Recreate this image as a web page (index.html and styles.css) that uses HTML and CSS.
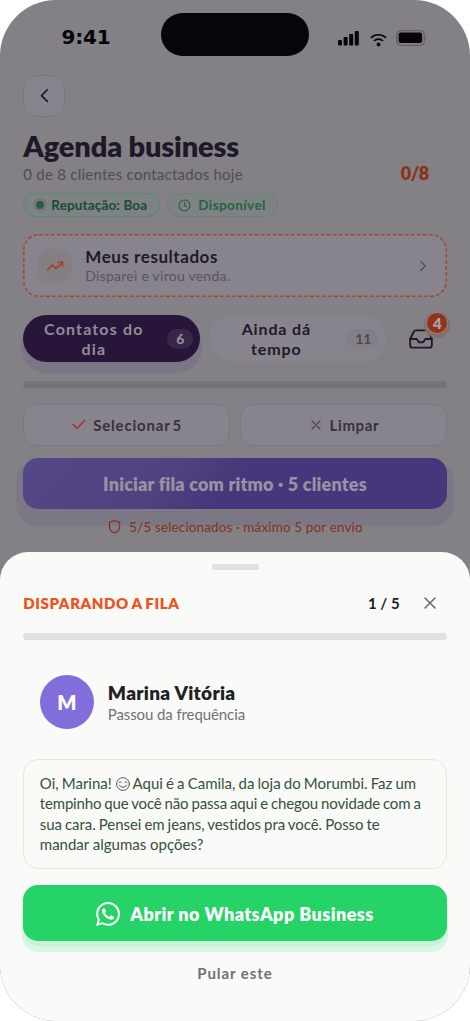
FILE: index.html
```html
<!DOCTYPE html>
<html lang="pt-BR">
<head>
<meta charset="utf-8">
<title>Agenda business</title>
<link rel="stylesheet" href="styles.css">
</head>
<body>
<div class="phone">
  <header class="status">
    <span class="clock">9:41</span>
    <span class="island"></span>
    <span class="signals">
      <svg width="21" height="15" viewBox="0 0 21 15" fill="#08040c"><rect x="0" y="9" width="4" height="5.5" rx="1"/><rect x="5.6" y="6" width="4" height="8.500" rx="1"/><rect x="11.200" y="3" width="4" height="11.500" rx="1"/><rect x="16.800" y="0" width="4" height="14.500" rx="1"/></svg>
      <svg class="wifi" width="17" height="14" viewBox="0 0 17 14" fill="none" stroke="#08040c" stroke-width="1.700"><path d="M1 4.800a10.800 10.800 0 0 1 15 0M4 8a6.500 6.500 0 0 1 9 0"/><circle cx="8.500" cy="11.500" r="1.900" fill="#08040c" stroke="none"/></svg>
      <svg class="battery" width="32" height="16" viewBox="0 0 32 16"><rect x=".7" y=".7" width="27.600" height="14.600" rx="4.300" fill="none" stroke="#655c6a" stroke-width="1.300"/><rect x="2.600" y="2.500" width="23.500" height="10.500" rx="2" fill="#08040c"/><path d="M29.600 5.700q1.800 2 0 4z" fill="#655c6a"/></svg>
    </span>
  </header>
  <main class="agenda">
    <button class="back"><svg width="20" height="20" viewBox="0 0 24 24" fill="none" stroke="#1f1828" stroke-width="2" stroke-linecap="round" stroke-linejoin="round"><path d="m16 18.500-7-7 7-7"/></svg></button>
    <div class="heading">
      <div><h1>Agenda business</h1><p>0 de 8 clientes contactados hoje</p></div>
      <strong class="score">0/8</strong>
    </div>
    <div class="chips">
      <span class="chip good"><i class="dot"></i><b>Reputação: Boa</b></span>
      <span class="chip"><svg width="13" height="13" viewBox="0 0 24 24" fill="none" stroke="#256345" stroke-width="2.200" stroke-linecap="round"><circle cx="12" cy="12" r="10"/><path d="M12 6v6l4 2"/></svg><b>Disponível</b></span>
    </div>
    <section class="results">
      <svg class="outline" width="424" height="63"><rect x=".8" y=".8" width="422.400" height="61.400" rx="15" fill="none" stroke="#9b4a33" stroke-width="1.500" stroke-dasharray="4 2"/></svg>
      <span class="trend"><svg width="18" height="18" viewBox="0 0 24 24" fill="none" stroke="#a54226" stroke-width="2" stroke-linecap="round" stroke-linejoin="round"><path d="m2 17 6.500-6.500 5 5L22 7"/><path d="M16 7h6v6"/></svg></span>
      <div class="results-text"><h2>Meus resultados</h2><p>Disparei e virou venda.</p></div>
      <svg width="18" height="18" viewBox="0 0 24 24" fill="none" stroke="#554f5a" stroke-width="1.800" stroke-linecap="round" stroke-linejoin="round"><path d="m9 18 6-6-6-6"/></svg>
    </section>
    <nav class="tabs">
      <button class="tab active"><span>Contatos do<br>dia</span><em>6</em></button>
      <button class="tab"><span>Ainda dá<br>tempo</span><em>11</em></button>
      <button class="inbox"><svg width="26" height="26" viewBox="0 0 24 24" fill="none" stroke="#1f1828" stroke-width="1.700" stroke-linecap="round" stroke-linejoin="round"><path d="M22 12h-6l-2 3h-4l-2-3H2"/><path d="M5.450 5.110 2 12v6a2 2 0 0 0 2 2h16a2 2 0 0 0 2-2v-6l-3.450-6.890A2 2 0 0 0 16.760 4H7.240a2 2 0 0 0-1.790 1.110z"/></svg><em>4</em></button>
    </nav>
    <div class="progress dim"></div>
    <div class="actions">
      <button><svg width="16" height="16" viewBox="0 0 24 24" fill="none" stroke="#a0361a" stroke-width="2.200" stroke-linecap="round" stroke-linejoin="round"><path d="M21 5 9 17l-6-6"/></svg><span class="select-label">Selecionar 5</span></button>
      <button class="clear"><svg width="16" height="16" viewBox="0 0 24 24" fill="none" stroke="#4b4552" stroke-width="1.800" stroke-linecap="round"><path d="M18 6 6 18M6 6l12 12"/></svg><span>Limpar</span></button>
    </div>
    <button class="start"><span>Iniciar fila com ritmo · 5 clientes</span></button>
    <p class="limit"><svg width="15" height="15" viewBox="0 0 24 24" fill="none" stroke="#852f1c" stroke-width="2" stroke-linejoin="round"><path d="M20 13c0 5-3.500 7.500-8 9-4.500-1.500-8-4-8-9V5c3 0 6-1.500 8-3 2 1.500 5 3 8 3z"/></svg><span>5/5 selecionados · máximo 5 por envio</span></p>
  </main>
  <section class="sheet">
    <i class="handle"></i>
    <div class="sheet-head"><h3>DISPARANDO A FILA</h3><strong>1 / 5</strong><svg width="20" height="20" viewBox="0 0 24 24" fill="none" stroke="#6a6370" stroke-width="1.800" stroke-linecap="round"><path d="M18 6 6 18M6 6l12 12"/></svg></div>
    <div class="progress"></div>
    <div class="person"><span class="avatar">M</span><div><h2>Marina Vitória</h2><p>Passou da frequência</p></div></div>
    <div class="message">
      <p class="m1">Oi, Marina! <svg class="smile" width="14" height="14" viewBox="0 0 14 14" fill="none" stroke="#36513b" stroke-width=".9" stroke-linecap="round"><circle cx="7" cy="7" r="6.400"/><path d="M3 5.600q1.200-2 2.400 0M8.600 5.600q1.200-2 2.400 0M3.200 8.200q3.800 4.600 7.600 0"/></svg> Aqui é a Camila, da loja do Morumbi. Faz um</p>
      <p class="m2">tempinho que você não passa aqui e chegou novidade com a</p>
      <p class="m3">sua cara. Pensei em jeans, vestidos pra você. Posso te</p>
      <p class="m4">mandar algumas opções?</p>
    </div>
    <button class="whatsapp"><svg width="24" height="24" viewBox="0 0 24 24" fill="#fff"><path d="M17.472 14.382c-.297-.149-1.758-.867-2.030-.967-.273-.099-.471-.148-.670.150-.197.297-.767.966-.940 1.164-.173.199-.347.223-.644.075-.297-.150-1.255-.463-2.390-1.475-.883-.788-1.480-1.761-1.653-2.059-.173-.297-.018-.458.130-.606.134-.133.298-.347.446-.520.149-.174.198-.298.298-.497.099-.198.050-.371-.025-.520-.075-.149-.669-1.612-.916-2.207-.242-.579-.487-.500-.669-.510-.173-.008-.371-.010-.570-.010-.198 0-.520.074-.792.372-.272.297-1.040 1.016-1.040 2.479 0 1.462 1.065 2.875 1.213 3.074.149.198 2.096 3.200 5.077 4.487.709.306 1.262.489 1.694.625.712.227 1.360.195 1.871.118.571-.085 1.758-.719 2.006-1.413.248-.694.248-1.289.173-1.413-.074-.124-.272-.198-.570-.347m-5.421 7.403h-.004a9.870 9.870 0 0 1-5.031-1.378l-.361-.214-3.741.982.998-3.648-.235-.374a9.860 9.860 0 0 1-1.510-5.260c.001-5.450 4.436-9.884 9.888-9.884 2.640 0 5.122 1.030 6.988 2.898a9.825 9.825 0 0 1 2.893 6.994c-.003 5.450-4.437 9.884-9.885 9.884m8.413-18.297A11.815 11.815 0 0 0 12.050 0C5.495 0 .160 5.335.157 11.892c0 2.096.547 4.142 1.588 5.945L.057 24l6.305-1.654a11.882 11.882 0 0 0 5.683 1.448h.005c6.554 0 11.890-5.335 11.893-11.893a11.821 11.821 0 0 0-3.480-8.413z"/></svg><span>Abrir no WhatsApp Business</span></button>
    <button class="skip">Pular este</button>
  </section>
</div>
</body>
</html>
```
FILE: styles.css
```css
* { box-sizing: border-box; }
body { margin: 0; background: #fff; font-family: Lato, sans-serif; }
h1, h2, h3, p { margin: 0; }
button { border: 0; padding: 0; background: none; font: inherit; color: inherit; }
em, i { font-style: normal; }
p, span, h1, h2, h3, strong, b { white-space: nowrap; }
svg { flex: none; display: block; }
.phone { position: relative; width: 470px; height: 1021px; overflow: hidden; border-radius: 56px; background: #838086; }

.status { height: 75px; display: grid; grid-template-columns: 161px 148px 161px; align-items: start; padding-top: 13px; }
.clock { padding: 11px 0 0 61.500px; font: bold 20px/27px "DejaVu Sans", sans-serif; letter-spacing: -.2px; color: #08040c; }
.island { height: 43px; border-radius: 22px; background: #08040c; }
.signals { display: flex; padding: 18px 0 0 29px; align-items: flex-start; }
.wifi { margin: 2px 0 0 11px; }
.battery { margin: -1px 0 0 9px; }

.agenda { padding: 0 23.300px; display: flex; flex-direction: column; color: #1f1828; }
.back { width: 42px; height: 42px; border: 1px solid #7b7685; border-radius: 14px; background: #88848e; display: grid; place-items: center; }
.heading { height: 76px; padding: 11px 18px 0 0; display: flex; justify-content: space-between; }
.heading h1 { font-size: 29px; line-height: 35px; font-weight: 800; letter-spacing: -.17px; }
.heading p { padding-top: 1px; font-size: 15px; line-height: 20px; letter-spacing: .25px; color: #514b57; }
.score { padding-top: 33px; font-size: 18px; line-height: 24px; color: #8c3219; font-weight: 800; letter-spacing: -.5px; }
.chips { display: flex; gap: 7px; }
.chip { height: 24px; width: 111px; border: 1px solid #757b80; border-radius: 12px; background: #7d8283; display: flex; align-items: center; padding-left: 10px; gap: 7px; font-size: 13.500px; letter-spacing: .4px; color: #256345; }
.good { width: 137px; border-color: #578878; padding-left: 9px; gap: 4px; letter-spacing: .15px; color: #184b36; }
.dot { width: 14px; height: 14px; border: 3px solid #77777e; border-radius: 50%; background: #245f46; }
.results { position: relative; height: 63px; margin-top: 17px; border-radius: 16px; background: #88848e; display: flex; align-items: center; padding: 0 15px; }
.outline { position: absolute; inset: 0; }
.trend { width: 34px; height: 34px; border-radius: 12px; background: #837f83; display: grid; place-items: center; }
.results-text { flex: 1; padding: 0 0 1px 13px; }
.results h2 { font-size: 17px; line-height: 20px; font-weight: 700; letter-spacing: .55px; }
.results p { font-size: 14px; line-height: 17px; letter-spacing: .25px; color: #5a535f; }
.tabs { display: flex; height: 47px; margin-top: 18px; gap: 9px; }
.tab { width: 177px; border-radius: 24px; background: #88848e; display: flex; align-items: center; justify-content: space-between; padding: 0 7px 0 20px; font-size: 16px; line-height: 20px; font-weight: 700; text-align: center; letter-spacing: 1.150px; }
.tab span { width: 101px; }
.tab em { min-width: 26px; height: 20px; border-radius: 10px; background: #827f87; color: #4d4753; font-size: 14px; text-align: center; letter-spacing: 0; }
.tab:not(.active) span { width: 94px; letter-spacing: .85px; }
.tab:not(.active) em { width: 32px; }
.tab.active { background: #28163a; color: #918c99; box-shadow: 0 9px 1px 2px #7b7686; }
.active em { background: #392747; color: #9c96a2; }
.inbox { position: relative; padding: 0 0 0 13px; display: flex; align-items: center; }
.inbox em { position: absolute; left: 31px; top: -3px; width: 22px; height: 22px; border: 1px solid #8d8791; border-radius: 50%; background: #913317; color: #aaa1a8; font-size: 15px; line-height: 20px; font-weight: 800; text-align: center; box-shadow: 0 2px 1px 2px #886b6e; }
.progress { height: 7px; border-radius: 4px; background: #e0e1e0; }
.dim { margin-top: 19px; background: #74737a; }
.actions { display: grid; grid-template-columns: 1fr 1fr; gap: 10px; margin-top: 16px; }
.actions button { height: 42px; border: 1px solid #7c7786; border-radius: 13px; background: #88848e; display: flex; align-items: center; justify-content: center; gap: 6px; font-size: 15px; font-weight: 700; letter-spacing: .6px; color: #37303e; }
.select-label { letter-spacing: .8px; word-spacing: -2.200px; }
.start { height: 51px; margin-top: 12px; border-radius: 15px; background: linear-gradient(135deg, #554888 0%, #50417f 35%, #47367b 50%, #47367b 100%); box-shadow: 0 10px 1px 7px #7c7785; color: #9992a2; font-size: 18px; font-weight: 800; letter-spacing: .19px; }
.limit { position: relative; height: 35px; display: flex; align-items: center; justify-content: center; gap: 7px; color: #852f1c; font-size: 13.500px; letter-spacing: .13px; }

.sheet { position: absolute; inset: 552px 0 0; padding: 12px 23.300px 0; border-radius: 28px 28px 0 0; background: #fafaf8; display: flex; flex-direction: column; color: #202123; }
.handle { width: 47px; height: 6px; border-radius: 3px; background: #e0e1e0; align-self: center; }
.sheet-head { height: 63px; display: flex; align-items: center; padding: 2px 7px 0 0; }
.sheet-head h3 { flex: 1; color: #ef5118; font-size: 15px; font-weight: 800; letter-spacing: .6px; word-spacing: -1px; }
.sheet-head strong { margin-right: 20px; font-size: 15px; }
.person { display: flex; gap: 14px; padding: 35px 16px 0 16.500px; height: 119px; }
.avatar { width: 54px; height: 54px; border-radius: 50%; background: #816edb; color: #fff; display: grid; place-items: center; font-size: 20px; font-weight: 800; }
.person h2 { padding-top: 6px; font-size: 19px; line-height: 24px; font-weight: 800; letter-spacing: .3px; }
.person p { font-size: 15px; line-height: 19px; letter-spacing: -.1px; color: #737175; }
.message { height: 110px; border: 1px solid #dfeecf; border-radius: 15px; padding: 13px 15.500px; color: #36513b; font-size: 15px; line-height: 20.400px; }
.message p { height: 20.400px; }
.m1 { letter-spacing: -.03px; word-spacing: -.6px; }
.m2 { letter-spacing: -.17px; word-spacing: -.6px; }
.m3 { letter-spacing: -.06px; word-spacing: -.7px; }
.smile { display: inline-block; vertical-align: -2px; margin-left: 1px; }
.whatsapp { margin-top: 16px; height: 56px; border-radius: 15px; background: #25d366; color: #fff; display: flex; align-items: center; justify-content: center; gap: 10px; padding-top: 1px; font-size: 18px; font-weight: 800; letter-spacing: .43px; box-shadow: 0 6px 0 -1px #c8f3d9, 0 10px 0 1px #d8f6e5; }
.skip { align-self: center; margin-top: 20px; font-size: 15px; line-height: 24px; font-weight: 700; letter-spacing: .95px; color: #737075; white-space: nowrap; }
```
